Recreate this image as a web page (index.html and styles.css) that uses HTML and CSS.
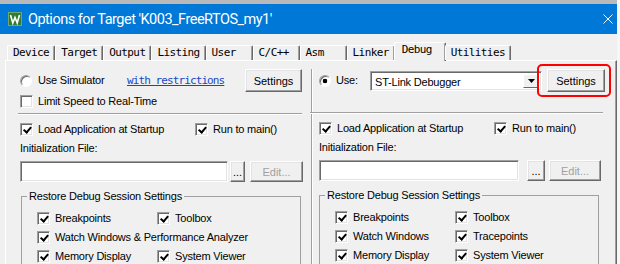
FILE: index.html
```html
<!DOCTYPE html>
<html>
	<head>
		<meta charset="utf-8">
		<title>Options for Target 'K003_FreeRTOS_my1'</title>
		<link rel="stylesheet" href="styles.css">
	</head>
	<body>
		<div class="window">
			<div class="desk"></div>
			<header class="titlebar">
				<svg class="app-icon" viewBox="0 0 14 14">
					<rect x="0.5" y="0.5" width="13" height="13" fill="#2f7d32" stroke="#6fa86f"/>
					<polyline points="2.5,3 4.8,11 7,5.5 9.2,11 11.5,3" fill="none" stroke="#fff" stroke-width="1.6"/>
				</svg>
				<span class="title">Options for Target 'K003_FreeRTOS_my1'</span>
				<svg class="close" viewBox="0 0 10 10">
					<path d="M0.5 0.5 L9.5 9.5 M9.5 0.5 L0.5 9.5" stroke="#fff" stroke-width="1"/>
				</svg>
			</header>
			<nav class="tabs">
				<span class="tab">Device</span>
				<span class="tab">Target</span>
				<span class="tab">Output</span>
				<span class="tab">Listing</span>
				<span class="tab">User</span>
				<span class="tab">C/C++</span>
				<span class="tab">Asm</span>
				<span class="tab">Linker</span>
				<span class="tab active">Debug</span>
				<span class="tab">Utilities</span>
			</nav>
			<div class="panel">
				<section class="col col-left">
					<div class="sim-row">
						<label class="opt"><span class="radio"></span>Use Simulator</label>
						<a class="link">with restrictions</a>
						<button class="btn">Settings</button>
					</div>
					<label class="opt limit"><span class="cb"></span>Limit Speed to Real-Time</label>
					<hr class="sep">
					<div class="pair">
						<label class="opt"><span class="cb on"></span>Load Application at Startup</label>
						<label class="opt"><span class="cb on"></span>Run to main()</label>
					</div>
					<div class="caption">Initialization File:</div>
					<div class="file-row">
						<span class="field"></span>
						<button class="btn dots">...</button>
						<button class="btn edit" disabled>Edit...</button>
					</div>
					<fieldset class="group">
						<legend>Restore Debug Session Settings</legend>
						<div class="group-grid">
							<label class="opt"><span class="cb on"></span>Breakpoints</label>
							<label class="opt"><span class="cb on"></span>Toolbox</label>
							<label class="opt wide"><span class="cb on"></span>Watch Windows &amp; Performance Analyzer</label>
							<label class="opt"><span class="cb on"></span>Memory Display</label>
							<label class="opt"><span class="cb on"></span>System Viewer</label>
						</div>
					</fieldset>
				</section>
				<section class="col col-right">
					<div class="use-row">
						<label class="opt"><span class="radio on"></span>Use:</label>
						<div class="combo">
							<span class="combo-text">ST-Link Debugger</span>
							<span class="combo-btn">
								<svg viewBox="0 0 7 4" width="7" height="4"><polygon points="0,0 7,0 3.5,4" fill="#000"/></svg>
							</span>
						</div>
						<span class="hl"><button class="btn">Settings</button></span>
					</div>
					<hr class="sep">
					<div class="pair">
						<label class="opt"><span class="cb on"></span>Load Application at Startup</label>
						<label class="opt"><span class="cb on"></span>Run to main()</label>
					</div>
					<div class="caption">Initialization File:</div>
					<div class="file-row">
						<span class="field"></span>
						<button class="btn dots">...</button>
						<button class="btn edit" disabled>Edit...</button>
					</div>
					<fieldset class="group">
						<legend>Restore Debug Session Settings</legend>
						<div class="group-grid">
							<label class="opt"><span class="cb on"></span>Breakpoints</label>
							<label class="opt"><span class="cb on"></span>Toolbox</label>
							<label class="opt"><span class="cb on"></span>Watch Windows</label>
							<label class="opt"><span class="cb on"></span>Tracepoints</label>
							<label class="opt"><span class="cb on"></span>Memory Display</label>
							<label class="opt"><span class="cb on"></span>System Viewer</label>
						</div>
					</fieldset>
				</section>
			</div>
		</div>
	</body>
</html>
```

FILE: styles.css
```css
body {
	background: #f7f7f7;
	color: #000;
	font-family: "Liberation Sans", Arial, sans-serif;
	font-size: 11px;
	height: 264px;
	letter-spacing: -0.2px;
	margin: 0;
	overflow: hidden;
}
.window {
	background: #f0f0f0;
	height: 264px;
	overflow: hidden;
	width: 617px;
}
.desk {
	background: #b9b9b9;
	height: 4px;
}
.titlebar {
	align-items: center;
	background: #0078d7;
	color: #fff;
	display: flex;
	height: 30px;
}
.app-icon {
	height: 14px;
	margin-left: 8px;
	width: 14px;
}
.title {
	font-family: Roboto, sans-serif;
	font-size: 14.5px;
	letter-spacing: -0.5px;
	margin-left: 6px;
}
.close {
	height: 10px;
	margin-left: auto;
	margin-right: 4px;
	width: 10px;
}
.tabs {
	align-items: flex-end;
	display: flex;
	height: 26px;
	padding-left: 7px;
	position: relative;
	z-index: 1;
}
.tab {
	border: 1px solid #fff;
	border-bottom: 0;
	border-radius: 2px 2px 0 0;
	border-right-color: #696969;
	box-shadow: inset -1px 0 #a0a0a0;
	box-sizing: border-box;
	font-family: "DejaVu Sans Mono", monospace;
	font-size: 11px;
	height: 15px;
	letter-spacing: -0.6px;
	line-height: 13px;
	min-width: 47px;
	padding: 0 5px;
	white-space: nowrap;
}
.tab.active {
	background: #f0f0f0;
	height: 19px;
	margin: 0 -1px -1px;
	min-width: 52px;
	padding-left: 7px;
}
.panel {
	border: 1px solid #fff;
	border-bottom: 0;
	border-right-color: #696969;
	box-shadow: inset -1px 0 #a0a0a0;
	box-sizing: border-box;
	display: flex;
	height: 210px;
	margin-left: 5px;
	width: 612px;
}
.col {
	display: flex;
	flex-direction: column;
}
.col-left {
	padding-top: 8px;
	width: 305px;
}
.col-right {
	border-left: 1px solid #a0a0a0;
	box-shadow: inset 1px 0 #fff;
	flex: 1;
	margin-top: 8px;
}
.opt {
	align-items: center;
	display: flex;
	height: 13px;
	line-height: 13px;
	white-space: nowrap;
}
.radio {
	background: #fff;
	border: 1px solid;
	border-color: #a0a0a0 #fff #fff #a0a0a0;
	border-radius: 50%;
	box-shadow: inset 1px 1px #696969;
	box-sizing: border-box;
	flex: none;
	height: 12px;
	margin-right: 6px;
	width: 12px;
}
.radio.on {
	background: radial-gradient(circle, #000 2px, #fff 2.6px);
	margin-right: 5px;
}
.cb {
	background: #fff;
	border: 1px solid;
	border-color: #a0a0a0 #fff #fff #a0a0a0;
	box-shadow: inset 1px 1px #696969, inset -1px -1px #e3e3e3;
	box-sizing: border-box;
	flex: none;
	height: 13px;
	margin-right: 5px;
	position: relative;
	width: 13px;
}
.cb.on::after {
	border: solid #000;
	border-width: 0 2px 2px 0;
	content: "";
	height: 6px;
	left: 3.5px;
	position: absolute;
	top: 0.5px;
	transform: rotate(40deg);
	width: 2.5px;
}
.btn {
	background: #f0f0f0;
	border: 1px solid;
	border-color: #fff #696969 #696969 #fff;
	box-shadow: inset -1px -1px #a0a0a0, inset 1px 1px #e3e3e3;
	box-sizing: border-box;
	color: #000;
	font: inherit;
	height: 23px;
	padding: 0;
}
.btn.edit {
	color: #a0a0a0;
}
.link {
	color: #1447c8;
	font-family: "DejaVu Sans Mono", monospace;
	font-size: 11px;
	letter-spacing: -0.9px;
	text-decoration: underline;
}
.sim-row {
	align-items: center;
	display: grid;
	grid-template-columns: 107px 118px 57px;
	height: 23px;
	padding-left: 14px;
}
.limit {
	margin-top: 3px;
	padding-left: 14px;
}
.sep {
	border: 0;
	border-bottom: 1px solid #fff;
	border-top: 1px solid #a0a0a0;
	height: 0;
	margin: 5px 0 0 12px;
	width: 284px;
}
.col-right .sep {
	margin: 20px 0 0 -2px;
	width: 293px;
}
.pair {
	display: grid;
	grid-template-columns: 175px auto;
	margin-top: 8px;
	padding-left: 14px;
}
.caption {
	line-height: 13px;
	margin-top: 6px;
	padding-left: 14px;
}
.file-row {
	display: flex;
	height: 21px;
	margin-top: 6px;
	padding-left: 14px;
}
.field {
	background: #fff;
	border: 1px solid;
	border-color: #a0a0a0 #fff #fff #a0a0a0;
	box-shadow: inset 1px 1px #696969, inset -1px -1px #e3e3e3;
	box-sizing: border-box;
	height: 21px;
	width: 208px;
}
.file-row .btn {
	height: 21px;
}
.dots {
	margin-left: 2px;
	width: 15px;
}
.edit {
	margin-left: 5px;
	width: 53px;
}
.group {
	border: 1px solid #a0a0a0;
	box-sizing: border-box;
	margin: 8px 0 0 15px;
	padding: 0 0 0 15px;
	width: 280px;
}
.group legend {
	line-height: 13px;
	margin-left: -10px;
	padding: 0 2px;
}
.group-grid {
	align-items: center;
	display: grid;
	grid-auto-rows: 19px;
	grid-template-columns: 120px auto;
	margin-top: 6px;
}
.wide {
	grid-column: 1 / -1;
}
.col-right .sim-row,
.col-right .pair,
.col-right .caption,
.col-right .file-row {
	padding-left: 7px;
}
.use-row {
	align-items: center;
	display: grid;
	grid-template-columns: 46px 172px 58px;
	column-gap: 5px;
	height: 23px;
	padding-left: 7px;
}
.use-row .opt {
	margin-right: -5px;
}
.combo {
	background: #fff;
	border: 1px solid;
	border-color: #a0a0a0 #fff #fff #a0a0a0;
	box-shadow: inset 1px 1px #696969, inset -1px -1px #e3e3e3;
	box-sizing: border-box;
	display: flex;
	height: 20px;
	padding: 2px;
}
.combo-text {
	flex: 1;
	line-height: 16px;
	padding-left: 2px;
}
.combo-btn {
	align-items: center;
	background: #f0f0f0;
	border: 1px solid;
	border-color: #fff #696969 #696969 #fff;
	box-sizing: border-box;
	display: flex;
	justify-content: center;
	width: 16px;
}
.hl {
	display: flex;
	position: relative;
}
.hl .btn {
	width: 58px;
}
.hl::after {
	border: 2px solid #f00;
	border-radius: 5px;
	bottom: -5px;
	content: "";
	left: -10px;
	position: absolute;
	right: -6px;
	top: -5px;
}
.col-right .field {
	width: 200px;
}
.col-right .dots {
	margin-left: 8px;
	width: 18px;
}
.col-right .edit {
	margin-left: 4px;
	width: 52px;
}
.col-right .group {
	margin-left: 7px;
}
```
